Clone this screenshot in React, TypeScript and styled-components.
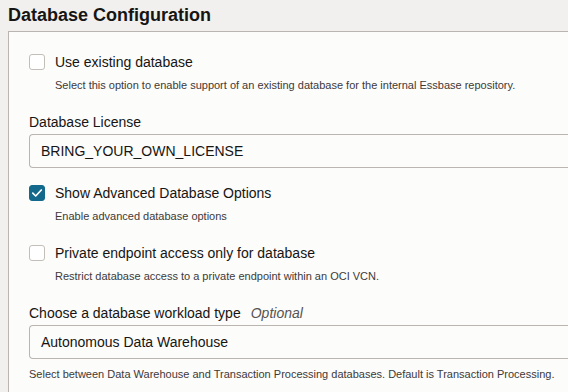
import React from 'react';
import styled, { createGlobalStyle } from 'styled-components';

const GlobalStyle = createGlobalStyle`
    html, body {
        margin: 0;
        padding: 0;
        background: #f1f0ee;
        overflow: hidden;
    }
    body {
        font-family: "Liberation Sans", Arial, sans-serif;
        color: #161513;
    }
`;

const Page = styled.div`
    box-sizing: border-box;
    width: 100vw;
    height: 100vh;
    overflow: hidden;
    padding: 3px 0 0 8px;
`;

const Title = styled.h2`
    margin: 0 0 4px;
    font-size: 18px;
    line-height: 24px;
    font-weight: bold;
    color: #161513;
`;

const Panel = styled.section`
    display: flex;
    flex-direction: column;
    width: calc(100% + 40px);
    box-sizing: border-box;
    background: #fcfcfb;
    border: 1px solid #bab5b0;
    border-right: none;
    padding: 20px 0 40px 20px;
`;

const Field = styled.div<{ $gap?: number }>`
    display: flex;
    flex-direction: column;
    margin-top: ${p => p.$gap ?? 0}px;
`;

const CheckRow = styled.label`
    display: flex;
    align-items: center;
    gap: 10px;
    height: 20px;
    font-size: 14px;
    line-height: 20px;
`;

const Box = styled.span<{ $checked?: boolean }>`
    display: flex;
    align-items: center;
    justify-content: center;
    width: 16px;
    height: 16px;
    box-sizing: border-box;
    border-radius: 3px;
    border: 1px solid ${p => p.$checked ? '#13698c' : '#c3beb9'};
    background: ${p => p.$checked ? '#13698c' : '#ffffff'};
`;

const Help = styled.div<{ $indent?: boolean; $top?: number }>`
    font-size: 11px;
    line-height: 16px;
    color: #3c3a38;
    margin-top: ${p => p.$top ?? 5}px;
    padding-left: ${p => p.$indent ? 26 : 0}px;
`;

const Label = styled.div`
    display: flex;
    gap: 10px;
    font-size: 14px;
    line-height: 20px;
    color: #161513;
`;

const Optional = styled.span`
    font-style: italic;
    color: #57534f;
`;

const Input = styled.div`
    display: flex;
    align-items: center;
    margin-top: 2px;
    height: 34px;
    box-sizing: border-box;
    padding: 0 11px;
    border: 1px solid #bab5b0;
    border-right: none;
    border-radius: 4px 0 0 4px;
    background: #fcfcfb;
    font-size: 14px;
    color: #161513;
`;

function CheckField({ label, help, checked, gap } : { label : string; help : string; checked? : boolean; gap? : number }) {
    return (
        <Field $gap={gap}>
            <CheckRow>
                <Box $checked={checked}>
                    {checked && (
                        <svg width="12" height="12" viewBox="0 0 12 12">
                            <path d="M1.8 6.2 L4.7 9 L10.3 3" fill="none" stroke="#fff" strokeWidth="1.7" strokeLinecap="round" strokeLinejoin="round" />
                        </svg>
                    )}
                </Box>
                {label}
            </CheckRow>
            <Help $indent>{help}</Help>
        </Field>
    );
}

export default function App() {
    return (
        <Page>
            <GlobalStyle />
            <Title>Database Configuration</Title>
            <Panel>
                <CheckField
                    label="Use existing database"
                    help="Select this option to enable support of an existing database for the internal Essbase repository."
                />
                <Field $gap={19}>
                    <Label>Database License</Label>
                    <Input>BRING_YOUR_OWN_LICENSE</Input>
                </Field>
                <CheckField
                    gap={15}
                    checked
                    label="Show Advanced Database Options"
                    help="Enable advanced database options"
                />
                <CheckField
                    gap={19}
                    label="Private endpoint access only for database"
                    help="Restrict database access to a private endpoint within an OCI VCN."
                />
                <Field $gap={19}>
                    <Label>
                        Choose a database workload type
                        <Optional>Optional</Optional>
                    </Label>
                    <Input>Autonomous Data Warehouse</Input>
                    <Help $top={7}>Select between Data Warehouse and Transaction Processing databases. Default is Transaction Processing.</Help>
                </Field>
            </Panel>
        </Page>
    );
}
